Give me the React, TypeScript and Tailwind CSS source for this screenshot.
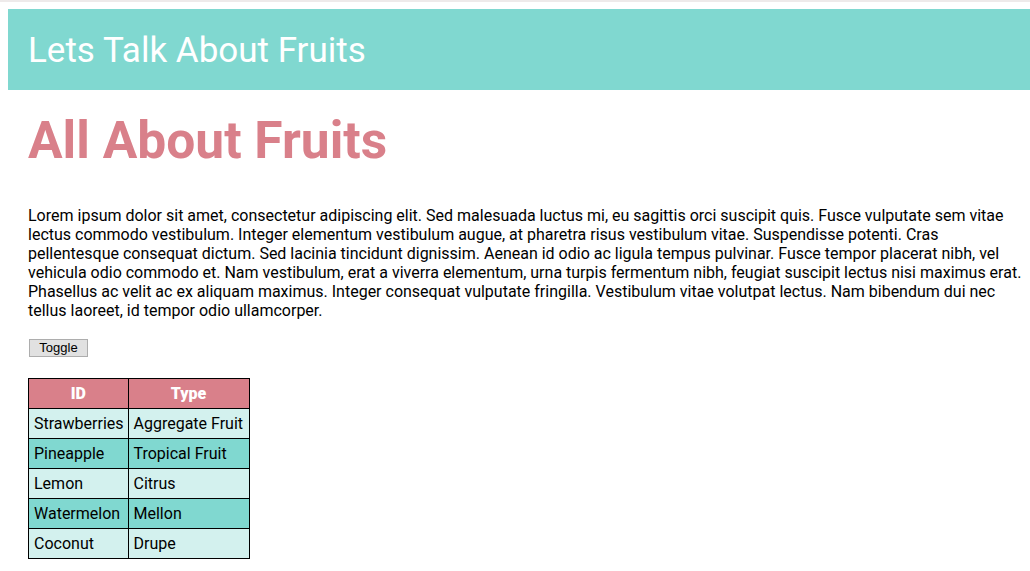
import React, { useState } from "react";

const fruits = [
  { id: "Strawberries", type: "Aggregate Fruit" },
  { id: "Pineapple", type: "Tropical Fruit" },
  { id: "Lemon", type: "Citrus" },
  { id: "Watermelon", type: "Mellon" },
  { id: "Coconut", type: "Drupe" },
];

const App = () => {
  const [show, setShow] = useState(true);

  return (
    <div className="min-h-[571px] bg-white font-['Roboto',sans-serif] text-black">
      <div className="h-[2px] bg-[#eeeaea]" />
      <header className="ml-[8px] mt-[7px] h-[81px] bg-[#80d8d0] flex items-center pl-[20px] pt-[3px]">
        <h2 className="text-[35px] text-white font-normal">Lets Talk About Fruits</h2>
      </header>
      <main className="pl-[28px] pr-[8px]">
        <h1 className="mt-[20px] text-[51.5px] leading-[61px] font-bold text-[#d9808a]">All About Fruits</h1>
        <p className="mt-[35px] text-[16px] leading-[19px]">
          Lorem ipsum dolor sit amet, consectetur adipiscing elit. Sed malesuada luctus mi, eu sagittis orci
          suscipit quis. Fusce vulputate sem vitae lectus commodo vestibulum. Integer elementum vestibulum
          augue, at pharetra risus vestibulum vitae. Suspendisse potenti. Cras pellentesque consequat dictum.
          Sed lacinia tincidunt dignissim. Aenean id odio ac ligula tempus pulvinar. Fusce tempor placerat nibh,
          vel vehicula odio commodo et. Nam vestibulum, erat a viverra elementum, urna turpis fermentum nibh,
          feugiat suscipit lectus nisi maximus erat. Phasellus ac velit ac ex aliquam maximus. Integer consequat
          vulputate fringilla. Vestibulum vitae volutpat lectus. Nam bibendum dui nec tellus laoreet, id tempor
          odio ullamcorper.
        </p>
        <button
          onClick={() => setShow(!show)}
          className="mt-[19px] ml-px block w-[59px] h-[18px] bg-[#e1e1e1] border border-[#adadad] font-['Liberation_Sans',sans-serif] text-[13px] leading-[16px]"
        >
          Toggle
        </button>
        {show && (
          <table className="mt-[21px] border-collapse text-[16px]">
            <thead>
              <tr className="bg-[#d9808a] text-white h-[30px]">
                <th className="border border-black w-[99px] font-black">ID</th>
                <th className="border border-black w-[121px] font-black">Type</th>
              </tr>
            </thead>
            <tbody>
              {fruits.map((f, i) => (
                <tr key={f.id} className={i % 2 === 0 ? "bg-[#d3f1ee] h-[30px]" : "bg-[#80d8d0] h-[30px]"}>
                  <td className="border border-black pl-[5px] pr-[4px] whitespace-nowrap">{f.id}</td>
                  <td className="border border-black pl-[5px] pr-[4px] whitespace-nowrap">{f.type}</td>
                </tr>
              ))}
            </tbody>
          </table>
        )}
      </main>
    </div>
  );
};

export default App;
